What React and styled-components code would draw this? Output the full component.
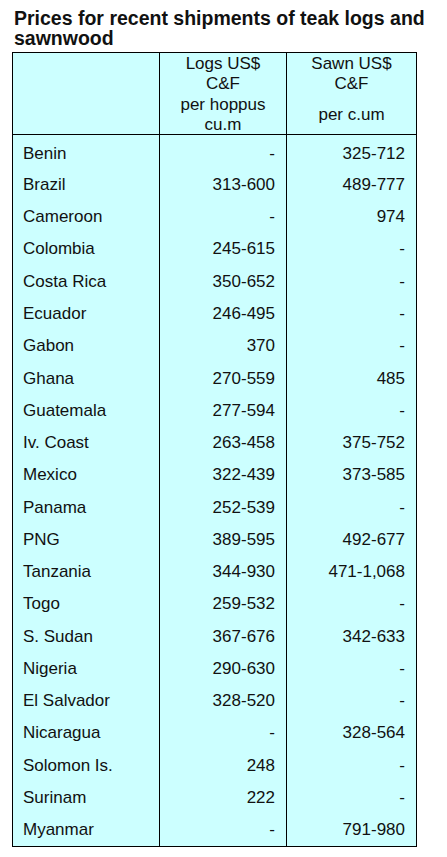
import React from "react";
import styled, { createGlobalStyle } from "styled-components";

const GlobalStyle = createGlobalStyle`
  html, body {
    margin: 0;
    padding: 0;
    background: #ffffff;
  }
  body {
    font-family: "Liberation Sans", Arial, sans-serif;
    color: #111;
  }
`;

const Page = styled.div`
  padding: 8px 0 0 12px;
`;

const Title = styled.h2`
  margin: 0 0 4px 2px;
  width: 425px;
  font-size: 19.5px;
  line-height: 20px;
  font-weight: bold;
`;

const Table = styled.table`
  border-collapse: collapse;
  table-layout: fixed;
  width: 404px;
  background: #ccffff;
  border: 1px solid #000;
  font-size: 17px;
`;

const HeadCell = styled.th`
  border: 1px solid #000;
  padding: 0;
  font-weight: normal;
  text-align: center;
  vertical-align: top;
  line-height: 20px;
  height: 80px;
`;

const HeadBlock = styled.div`
  height: ${(p) => (p.$second ? "39px" : "40px")};
  margin-top: ${(p) => (p.$second ? "1px" : "1px")};
  display: flex;
  flex-direction: column;
  justify-content: center;
`;

const Row = styled.tr`
  height: 32.27px;

  &:first-child {
    height: 34.3px;
  }
  &:first-child td {
    padding-top: 4px;
  }
`;

const Cell = styled.td`
  border-left: 1px solid #000;
  border-right: 1px solid #000;
  padding: 0 ${(p) => (p.$name ? "0" : "11px")} 0 ${(p) => (p.$name ? "10px" : "0")};
  text-align: ${(p) => (p.$name ? "left" : "right")};
  vertical-align: middle;
  line-height: 20px;
  white-space: nowrap;
`;

const rows = [
  ["Benin", "-", "325-712"],
  ["Brazil", "313-600", "489-777"],
  ["Cameroon", "-", "974"],
  ["Colombia", "245-615", "-"],
  ["Costa Rica", "350-652", "-"],
  ["Ecuador", "246-495", "-"],
  ["Gabon", "370", "-"],
  ["Ghana", "270-559", "485"],
  ["Guatemala", "277-594", "-"],
  ["Iv. Coast", "263-458", "375-752"],
  ["Mexico", "322-439", "373-585"],
  ["Panama", "252-539", "-"],
  ["PNG", "389-595", "492-677"],
  ["Tanzania", "344-930", "471-1,068"],
  ["Togo", "259-532", "-"],
  ["S. Sudan", "367-676", "342-633"],
  ["Nigeria", "290-630", "-"],
  ["El Salvador", "328-520", "-"],
  ["Nicaragua", "-", "328-564"],
  ["Solomon Is.", "248", "-"],
  ["Surinam", "222", "-"],
  ["Myanmar", "-", "791-980"],
];

export default function App() {
  return (
    <>
      <GlobalStyle />
      <Page>
        <Title>Prices for recent shipments of teak logs and sawnwood</Title>
        <Table>
          <colgroup>
            <col style={{ width: 147 }} />
            <col style={{ width: 127 }} />
            <col style={{ width: 130 }} />
          </colgroup>
          <thead>
            <tr>
              <HeadCell />
              <HeadCell>
                <HeadBlock>
                  <span>Logs US$</span>
                  <span>C&amp;F</span>
                </HeadBlock>
                <HeadBlock $second>
                  <span>per hoppus</span>
                  <span>cu.m</span>
                </HeadBlock>
              </HeadCell>
              <HeadCell>
                <HeadBlock>
                  <span>Sawn US$</span>
                  <span>C&amp;F</span>
                </HeadBlock>
                <HeadBlock $second>
                  <span>per c.um</span>
                </HeadBlock>
              </HeadCell>
            </tr>
          </thead>
          <tbody>
            {rows.map(([country, logs, sawn]) => (
              <Row key={country}>
                <Cell $name>{country}</Cell>
                <Cell>{logs}</Cell>
                <Cell>{sawn}</Cell>
              </Row>
            ))}
          </tbody>
        </Table>
      </Page>
    </>
  );
}
